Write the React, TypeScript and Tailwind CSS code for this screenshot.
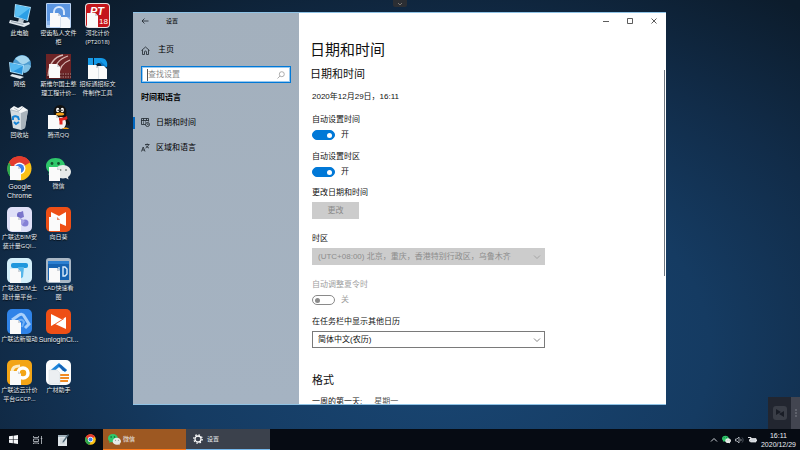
import type { ReactNode } from "react";

const UI_FONT = "font-['Liberation_Sans','Noto_Sans_CJK_SC',sans-serif]";

/* ---------- desktop icons (25 x 25 grid) ---------- */

function Sheet({ x = 3, y = 11 }: { x?: number; y?: number }) {
  return (
    <g>
      <path d={`M${x} ${y}h8l3 3v11h-11z`} fill="#fafafa" />
      <path d={`M${x + 8} ${y}v3h3z`} fill="#cfd3d8" />
    </g>
  );
}

function Art({ children }: { children: ReactNode }) {
  return (
    <svg viewBox="0 0 25 25" className="size-[25px] shrink-0" aria-hidden="true">
      {children}
    </svg>
  );
}

const pcArt = (
  <Art>
    <path d="M8 1l16 3-3 14-14-4z" fill="#a8dcf8" />
    <path d="M9 2l14 3-3 12-12-4z" fill="#2c9fe6" />
    <path d="M9 2l14 3-12 9-3-1z" fill="#5cc0f4" />
    <path d="M12 15l5 2-1 3-5-1z" fill="#b9c4cd" />
    <path d="M3 17l15 3 4-1 1 2-6 3-15-4z" fill="#dfe6ec" />
    <path d="M4 18l13 3-1 1-12-3z" fill="#9aa7b2" />
  </Art>
);

const networkArt = (
  <Art>
    <circle cx="15" cy="10" r="9" fill="#4d9cd0" />
    <path d="M8 5c4-5 12-5 15 2-3 1-5 4-8 3s-4-4-7-5z" fill="#a5d6ee" />
    <path d="M16 12c3-2 6-2 8 0-1 4-4 7-7 7z" fill="#7ec0e4" />
    <path d="M2 8l15 3-1 10-13-3z" fill="#a8dcf8" />
    <path d="M3 9l13 3-1 8-11-3z" fill="#2a96de" />
    <path d="M3 9l13 3-11 6-1-1z" fill="#55b8f0" />
    <path d="M5 20l9 2 3 1-4 2-10-3z" fill="#dfe6ec" />
  </Art>
);

const binArt = (
  <Art>
    <path d="M3 4l18 1-3 18-4 2-8-2z" fill="#d5dce1" />
    <path d="M14 7l7-2-3 18-4 2z" fill="#aab4bc" />
    <path d="M3 4l4-3 4 2 4-2 6 4-7 3z" fill="#f5f7f8" />
    <path d="M7 3l5 3 4-4M4 5l8 2" stroke="#b5bfc7" fill="none" />
    <path d="M8 11l3 1 1 3M12 17l-3 2-2-2M6 15l0-3 2-1" stroke="#1583d6" strokeWidth="2" fill="none" />
  </Art>
);

function ChromeShape() {
  return (
    <g>
      <circle cx="12.500" cy="12.500" r="12" fill="#fbc116" />
      <path d="M12.500 12.500L2 6.500A12 12 0 0 1 23 6.500z" fill="#e33b2e" />
      <path d="M12 6.500h11a12 12 0 0 0-21 0l5 9z" fill="#e33b2e" />
      <path d="M2 6.500l5.500 9 5 3-3 6A12 12 0 0 1 2 6.500z" fill="#2da94f" />
      <circle cx="12.500" cy="12.500" r="6" fill="#fff" />
      <circle cx="12.500" cy="12.500" r="4.600" fill="#3f7fe8" />
    </g>
  );
}

function WeChatShape() {
  return (
    <g>
      <path d="M9.500 2C4 2 0 5.500 0 10c0 2.500 1.200 4.600 3 6l-.6 3 3.400-1.600c1.200.4 2.400.6 3.700.6C15 18 19 14.500 19 10S15 2 9.500 2z" fill="#2fc86b" />
      <circle cx="6" cy="7.500" r="1.400" fill="#14512c" />
      <circle cx="12.500" cy="7.500" r="1.400" fill="#14512c" />
      <path d="M17 9c-4.500 0-8 3-8 6.800s3.500 6.700 8 6.700c1 0 2-.2 2.900-.5L22.500 23.500 22 21c1.800-1.200 3-3 3-5.200C25 12 21.500 9 17 9z" fill="#e6eae8" />
      <circle cx="14.500" cy="14" r="1" fill="#7d8782" />
      <circle cx="20" cy="14" r="1" fill="#7d8782" />
    </g>
  );
}

const chromeArt = (
  <Art>
    <ChromeShape />
    <Sheet x={3} y={10} />
  </Art>
);

const wechatArt = (
  <Art>
    <WeChatShape />
    <Sheet x={3} y={11} />
  </Art>
);

const qqArt = (
  <Art>
    <ellipse cx="14" cy="16" rx="8" ry="8" fill="#111" />
    <ellipse cx="14" cy="7" rx="6.500" ry="7" fill="#111" />
    <path d="M20 12l4 6-1 3-3-4z" fill="#111" />
    <ellipse cx="15" cy="18" rx="5" ry="6" fill="#f2f2f2" />
    <ellipse cx="11.700" cy="5" rx="1.600" ry="2.200" fill="#fff" />
    <ellipse cx="16.300" cy="5" rx="1.600" ry="2.200" fill="#fff" />
    <circle cx="12.200" cy="5.300" r=".8" fill="#111" />
    <circle cx="15.900" cy="5.300" r=".8" fill="#111" />
    <ellipse cx="14" cy="9" rx="4.200" ry="1.600" fill="#f5a31b" />
    <path d="M8 11c4 2.500 9 2.500 13 0l.5 3c-2 1-3 1.300-5 1.500v4h-3v-4c-2 0-4-.5-6-1.500z" fill="#e02420" />
    <path d="M16 24c2-2 6-2 7 0z" fill="#f5a31b" />
    <Sheet x={2} y={10} />
  </Art>
);

const cabinetArt = (
  <Art>
    <rect width="25" height="25" rx="1" fill="#b9d3f4" />
    <rect x="1" y="1" width="23" height="20" fill="#5b95e0" />
    <path d="M8 12V9a5 5 0 0 1 10 0v3" stroke="#d9e8fb" strokeWidth="2" fill="none" />
    <path d="M1 18l23-4v8H1z" fill="#86b2ec" />
    <Sheet x={4} y={10} />
    <path d="M14 14h7l3 3v8H14z" fill="#f4f7fb" />
    <path d="M14.500 14v11" stroke="#c4d2e4" strokeWidth=".6" />
  </Art>
);

const ptArt = (
  <Art>
    <rect width="25" height="25" rx="4" fill="#e8e2e4" />
    <rect x="1" y="1" width="23" height="23" rx="3" fill="#c4161c" />
    <text x="5" y="12" fontSize="11" fontWeight="700" fontStyle="italic" fill="#fff" fontFamily="Liberation Sans">PT</text>
    <text x="14" y="21" fontSize="8" fill="#fff" fontFamily="Liberation Sans">18</text>
    <Sheet x={2} y={10} />
  </Art>
);

const landArt = (
  <Art>
    <rect width="25" height="25" fill="#6d2426" />
    <rect x="0" y="19" width="25" height="6" fill="#5a1c1f" />
    <path d="M2 22C3 10 8 3 17 1M7 22C8 12 12 5 22 2M13 22c0-8 3-13 11-16" stroke="#d9b8b4" strokeWidth="1.300" fill="none" />
    <path d="M14 20h11M14 23h11" stroke="#b8928f" strokeDasharray="1.500 1" />
    <Sheet x={3} y={10} />
  </Art>
);

const bidArt = (
  <Art>
    <path d="M3 4h5v8H3z" fill="#1a9be6" />
    <path d="M9 4h7c5 0 7 4 6 9h-5c0-3-1-4-4-4l-4 3z" fill="#149ae8" />
    <path d="M15 7l7 6h-5z" fill="#0b72bd" />
    <Sheet x={3} y={11} />
    <path d="M13 12h6l3 3v10h-9z" fill="#fafafa" />
    <path d="M13.500 12v13" stroke="#c8d0d6" strokeWidth=".6" />
  </Art>
);

const gqiArt = (
  <Art>
    <rect width="25" height="25" rx="5" fill="#dfe0f8" />
    <circle cx="13" cy="8" r="3" fill="#6f6ac4" />
    <path d="M11 6l5-2 1 6-3 1z" fill="#7a75cc" />
    <circle cx="18" cy="16" r="3.500" fill="#8581d6" />
    <path d="M12 10l6 4-3 4-4-3z" fill="#a5a1e4" />
    <Sheet x={3} y={10} />
  </Art>
);

const sunflowerArt = (
  <Art>
    <rect width="25" height="25" rx="5" fill="#ee4f16" />
    <path d="M5 5l8 4 7-4v14l-7-3-8 3z" fill="#fff" />
    <Sheet x={3} y={10} />
    <path d="M11 10v3h3z" fill="#ee8a66" />
  </Art>
);

const sunloginArt = (
  <Art>
    <rect width="25" height="25" rx="5" fill="#ee4f16" />
    <path d="M5 5l12 6-12 6z" fill="#fff" />
    <path d="M20 8v12L8 14.500z" fill="#fff" />
    <path d="M7 16.500L18 9.500" stroke="#ee4f16" strokeWidth=".9" />
  </Art>
);

const civilArt = (
  <Art>
    <rect width="25" height="25" rx="5" fill="#d4effb" />
    <rect x="4" y="5" width="17" height="5" rx="2" fill="#1f97dd" />
    <path d="M11 9h6l-1 10-3 2z" fill="#56b6ea" />
    <Sheet x={3} y={11} />
  </Art>
);

const cadArt = (
  <Art>
    <rect width="25" height="25" rx="3" fill="#a9b7c5" />
    <rect x="2" y="3" width="21" height="19" fill="#1763b1" />
    <path d="M2 3h21v3H2z" fill="#2c7fd0" />
    <path d="M13 9v9M17 9v9h2l2-2v-5l-2-2z" stroke="#dcecfa" strokeWidth="1.400" fill="none" />
    <Sheet x={3} y={10} />
  </Art>
);

const driverArt = (
  <Art>
    <rect width="25" height="25" rx="5" fill="#2f83e8" />
    <path d="M5 11l7-5c2-1 4-1 5 1l5 8-4 4" stroke="#a9d0fb" strokeWidth="3" fill="none" />
    <path d="M9 13l4-2c2-1 3 0 4 2l-2 5" stroke="#6fb0f6" strokeWidth="2" fill="none" />
    <Sheet x={3} y={11} />
  </Art>
);

const gccpArt = (
  <Art>
    <rect width="25" height="25" rx="5" fill="#f3a516" />
    <path d="M5 13c0-6 3-7 8-7" stroke="#fdebc0" strokeWidth="3" fill="none" />
    <circle cx="16" cy="13" r="5" stroke="#fff" strokeWidth="3.500" fill="none" />
    <Sheet x={3} y={11} />
  </Art>
);

const materialArt = (
  <Art>
    <rect width="25" height="25" rx="5" fill="#fbfcfd" />
    <path d="M6 11l7-6 7 6" stroke="#1f86dc" strokeWidth="3" fill="none" />
    <path d="M12 5l3 0 6 6h-4z" fill="#155fb0" />
    <path d="M14 15h9M14 18h9M14 21h8" stroke="#f08a24" strokeWidth="1.800" />
    <path d="M3 10h8l3 3v11H3z" fill="#eceff2" stroke="#d3d8dd" strokeWidth=".5" />
  </Art>
);

type Shortcut = { art: ReactNode; lines: string[]; latin?: boolean };

const columns: Shortcut[][] = [
  [
    { art: pcArt, lines: ["此电脑"] },
    { art: networkArt, lines: ["网络"] },
    { art: binArt, lines: ["回收站"] },
    { art: chromeArt, lines: ["Google", "Chrome"], latin: true },
    { art: gqiArt, lines: ["广联达BIM安", "装计量GQI..."] },
    { art: civilArt, lines: ["广联达BIM土", "建计量平台..."] },
    { art: driverArt, lines: ["广联达新驱动"] },
    { art: gccpArt, lines: ["广联达云计价", "平台GCCP..."] },
  ],
  [
    { art: cabinetArt, lines: ["密齿私人文件", "柜"] },
    { art: landArt, lines: ["斯维尔国土整", "理工程计价..."] },
    { art: qqArt, lines: ["腾讯QQ"] },
    { art: wechatArt, lines: ["微信"] },
    { art: sunflowerArt, lines: ["向日葵"] },
    { art: cadArt, lines: ["CAD快速看", "图"] },
    { art: sunloginArt, lines: ["SunloginCl..."], latin: true },
    { art: materialArt, lines: ["广材助手"] },
  ],
  [
    { art: ptArt, lines: ["河北计价", "(PT2018)"] },
    { art: bidArt, lines: ["招标通招标文", "件制作工具"] },
  ],
];

function DesktopIcons() {
  return (
    <div className="flex pt-[3px] font-['Open_Sans','Noto_Sans_CJK_SC',sans-serif]">
      {columns.map((items, i) => (
        <div key={i} className="flex w-[39px] flex-col">
          {items.map((item) => (
            <button key={item.lines[0]} type="button" className="flex h-[51px] flex-col items-center gap-px">
              {item.art}
              <span
                className={`flex flex-col items-center leading-[9px] whitespace-nowrap text-[#e9eef3] [text-shadow:0_1px_1px_#000] ${
                  item.latin ? "font-['Liberation_Sans',sans-serif] text-[7px]" : "text-[6px]"
                }`}
              >
                {item.lines.map((line) => (
                  <span key={line}>{line}</span>
                ))}
              </span>
            </button>
          ))}
        </div>
      ))}
    </div>
  );
}

/* ---------- settings window ---------- */

function Sidebar() {
  return (
    <aside className="flex w-[166px] shrink-0 flex-col bg-linear-to-b from-[#a3b0bd] to-[#a5b3c2] text-[8px] leading-3 text-black">
      <header className="flex h-[15px] items-center gap-[17px] pl-2 text-[6px]">
        <button type="button" aria-label="返回">
          <svg viewBox="0 0 8 8" className="size-2" fill="none" stroke="#1d242b" strokeWidth=".8">
            <path d="M7.500 4H1M3.500 1.500L1 4l2.500 2.500" />
          </svg>
        </button>
        <span>设置</span>
      </header>

      <button type="button" className="mt-4 flex h-3 items-center gap-2 pl-2">
        <svg viewBox="0 0 9 9" className="size-[9px]" fill="none" stroke="#1d242b" strokeWidth=".8">
          <path d="M.5 4.500L4.500 1l4 3.500M1.500 4v4.500h2V6a1 1 0 0 1 2 0v2.500h2V4" />
        </svg>
        主页
      </button>

      <label className="mx-2 mt-[10px] flex h-[17px] items-center border border-[#0078d7] bg-white px-[5px] ring-1 ring-[#0078d7]/40 ring-inset">
        <input
          type="search"
          aria-label="查找设置"
          placeholder="查找设置"
          className="w-full min-w-0 flex-1 border-l border-[#555] bg-transparent text-[8px] leading-3 outline-none placeholder:text-[#8a8a8a]"
        />
        <svg viewBox="0 0 8 8" className="size-2 shrink-0" fill="none" stroke="#9a9a9a" strokeWidth=".8">
          <circle cx="4.800" cy="3.200" r="2.500" />
          <path d="M3 5L.5 7.500" />
        </svg>
      </label>

      <h2 className="mt-[9px] ml-2 font-bold">时间和语言</h2>

      <nav className="mt-[6px] flex flex-col">
        <a href="#date" aria-current="page" className="flex h-[25px] items-center">
          <span className="h-3 w-[2px] bg-[#0067c0]" />
          <svg viewBox="0 0 9 9" className="mx-[6px] size-[9px]" fill="none" stroke="#1d242b" strokeWidth=".8">
            <path d="M4.500 6.500H.5v-6h7v3M.5 2.500h7M2 4h1M4 4h1M2 5.200h1M2.500.5v2M5.500.5v2" />
            <circle cx="6.500" cy="6.500" r="2" />
            <path d="M6.500 5.500v1h1" />
          </svg>
          日期和时间
        </a>
        <a href="#region" className="flex h-[25px] items-center">
          <span className="h-3 w-[2px]" />
          <svg viewBox="0 0 9 9" className="mx-[6px] size-[9px]" fill="none" stroke="#1d242b" strokeWidth=".8">
            <path d="M.5 8.500l1.700-4.500L4 8.500M1.200 7h2.200M4 1.500h4.500M6.200.5v1M7.700 1.500C7 3.500 6 4.500 4.500 5M5 2.500c.5 1.200 1.500 2 3 2.500" />
          </svg>
          区域和语言
        </a>
      </nav>
    </aside>
  );
}

function Toggle({ id, label, on, disabled = false }: { id: string; label: string; on: boolean; disabled?: boolean }) {
  return (
    <div className={disabled ? "text-[#a0a0a0]" : ""}>
      <label htmlFor={id} className="block">
        {label}
      </label>
      <div className="mt-1 flex h-[10px] items-center gap-[6px]">
        <input
          id={id}
          type="checkbox"
          role="switch"
          defaultChecked={on}
          disabled={disabled}
          className="flex h-[10px] w-[23px] appearance-none items-center rounded-full border border-[#8a8a8a] px-[2px] before:size-[5px] before:rounded-full before:bg-[#8a8a8a] checked:justify-end checked:border-[#0078d7] checked:bg-[#0078d7] checked:before:bg-white"
        />
        <span>{on ? "开" : "关"}</span>
      </div>
    </div>
  );
}

function Dropdown({ id, label, value, disabled = false }: { id: string; label: string; value: string; disabled?: boolean }) {
  return (
    <div>
      <label htmlFor={id} className="block">
        {label}
      </label>
      <div className="mt-[3px] grid w-[233px] items-center">
        <select
          id={id}
          disabled={disabled}
          defaultValue={value}
          className="col-start-1 row-start-1 h-[17px] w-full appearance-none border border-[#7a7a7a] bg-white px-[5px] leading-3 disabled:border-[#cccccc] disabled:bg-[#cccccc] disabled:text-[#8c8c8c] disabled:opacity-100"
        >
          <option>{value}</option>
        </select>
        <svg viewBox="0 0 8 8" className="pointer-events-none col-start-1 row-start-1 mr-1 size-2 justify-self-end" fill="none" stroke={disabled ? "#999999" : "#666666"} strokeWidth=".8">
          <path d="M1 2.500l3 3 3-3" />
        </svg>
      </div>
    </div>
  );
}

function WindowButtons() {
  return (
    <div className="flex h-[15px] justify-end text-[#333]">
      <button type="button" aria-label="最小化" className="flex w-6 items-center justify-center">
        <svg viewBox="0 0 6 6" className="size-[6px]" stroke="currentColor" strokeWidth=".8">
          <path d="M0 3.500h6" />
        </svg>
      </button>
      <button type="button" aria-label="最大化" className="flex w-6 items-center justify-center">
        <svg viewBox="0 0 6 6" className="size-[6px]" fill="none" stroke="currentColor" strokeWidth=".8">
          <path d="M.5 .5h5v5h-5z" />
        </svg>
      </button>
      <button type="button" aria-label="关闭" className="flex w-6 items-center justify-center">
        <svg viewBox="0 0 6 6" className="size-[6px]" stroke="currentColor" strokeWidth=".8">
          <path d="M.5 .5l5 5M5.500 .5l-5 5" />
        </svg>
      </button>
    </div>
  );
}

function SettingsWindow() {
  return (
    <section className="absolute top-3 right-[134px] bottom-[45px] left-[133px] flex overflow-hidden border-y border-[#8fc3e6] bg-white">
      <Sidebar />
      <div className="flex min-w-0 flex-1 flex-col">
        <WindowButtons />
        <div className="flex min-h-0 flex-1">
          <main className="min-w-0 flex-1 overflow-hidden pt-3 pl-[13px] text-[8px] leading-3 text-[#111]">
            <h1 className="-ml-[2px] text-[15px] leading-5">日期和时间</h1>
            <h2 className="mt-[6px] -ml-[2px] text-[11px] leading-4">日期和时间</h2>
            <p className="mt-[9px]">2020年12月29日，16:11</p>
            <div className="mt-[11px] flex flex-col gap-[11px]">
              <Toggle id="auto-time" label="自动设置时间" on />
              <Toggle id="auto-zone" label="自动设置时区" on />
            </div>
            <p className="mt-[10px]">更改日期和时间</p>
            <button type="button" disabled className="mt-[3px] block h-[17px] w-[47px] bg-[#cccccc] text-[#8a8a8a]">
              更改
            </button>
            <div className="mt-[14px]">
              <Dropdown id="zone" label="时区" value="(UTC+08:00) 北京，重庆，香港特别行政区，乌鲁木齐" disabled />
            </div>
            <div className="mt-[14px]">
              <Toggle id="dst" label="自动调整夏令时" on={false} disabled />
            </div>
            <div className="mt-[11px]">
              <Dropdown id="calendar" label="在任务栏中显示其他日历" value="简体中文(农历)" />
            </div>
            <h2 className="mt-6 text-[11px] leading-4">格式</h2>
            <dl className="mt-2 flex gap-3">
              <dt>一周的第一天:</dt>
              <dd className="text-[#555]">星期一</dd>
            </dl>
          </main>
          <div className="w-[2px] pt-[42px]">
            <div className="h-[206px] w-px bg-[#6f7780]" />
          </div>
        </div>
      </div>
    </section>
  );
}

/* ---------- taskbar ---------- */

function Taskbar() {
  return (
    <footer className="flex h-[21px] shrink-0 items-stretch bg-[#060b13] text-[6px] leading-[9px] text-[#eceff3]">
      <button type="button" aria-label="开始" className="flex w-[26px] items-center justify-center">
        <svg viewBox="0 0 9 9" className="size-[9px]" fill="#f5f7f9">
          <path d="M0 1.300L3.900.8v3.400H0zM4.500.7L9 0v4.200H4.500zM0 4.800h3.900v3.400L0 7.700zM4.500 4.800H9V9l-4.500-.7z" />
        </svg>
      </button>
      <button type="button" aria-label="任务视图" className="flex w-[23px] items-center justify-center">
        <svg viewBox="0 0 10 8" className="h-2 w-[10px]" fill="none" stroke="#c3c8ce" strokeWidth=".8">
          <path d="M.5 0v1.500h5V0M.5 3h5v2.500h-5zM.5 8V7h5v1M8.500 0v8M7.700 2.500h1.600" />
        </svg>
      </button>
      <button type="button" aria-label="记事本" className="flex w-[28px] items-center justify-center">
        <svg viewBox="0 0 12 12" className="size-3">
          <path d="M1 1h9v11H1z" fill="#dfe6ea" />
          <path d="M1 1h9v2H1z" fill="#9fb0ba" />
          <path d="M3 5h4M3 7h3M3 9h5" stroke="#b4c0c8" strokeWidth=".7" />
          <path d="M11 0l1 1-5 7-1.500.7.3-1.700z" fill="#4c6573" />
        </svg>
      </button>
      <button type="button" aria-label="Google Chrome" className="flex w-[26px] items-center justify-center">
        <svg viewBox="0 0 25 25" className="size-[11px]">
          <ChromeShape />
        </svg>
      </button>
      <button type="button" className="flex w-[83px] items-center gap-[2px] border-b border-[#ff7a1a] bg-[#9d5822] pl-[5px]">
        <svg viewBox="0 0 25 25" className="size-[13px]">
          <WeChatShape />
        </svg>
        微信
      </button>
      <button type="button" className="flex w-[84px] items-center gap-1 border-b border-[#76b9ed] bg-[#3b414c] pl-[7px]">
        <svg viewBox="0 0 10 10" className="size-[10px]" fill="none" stroke="#fff">
          <circle cx="5" cy="5" r="3" strokeWidth="1.300" />
          <circle cx="5" cy="5" r="4.200" strokeWidth="1.300" strokeDasharray="1.500 1.800" />
        </svg>
        设置
      </button>

      <div className="ml-auto flex items-center gap-1 pr-1">
        <button type="button" aria-label="显示隐藏的图标">
          <svg viewBox="0 0 8 8" className="size-2" fill="none" stroke="#dfe3e8" strokeWidth=".9">
            <path d="M1 5.500l3-3 3 3" />
          </svg>
        </button>
        <svg viewBox="0 0 25 25" className="size-[9px]" aria-hidden="true">
          <WeChatShape />
        </svg>
        <svg viewBox="0 0 9 8" className="h-2 w-[9px]" fill="none" stroke="#c3c8ce" strokeWidth=".8" aria-hidden="true">
          <path d="M.5 3v2h1.500L4 7V1L2 3zM5.500 2.800c.7.700.7 1.700 0 2.400" />
          <path d="M7 1.500c1.500 1.500 1.500 3.500 0 5" stroke="#5d646d" />
        </svg>
        <svg viewBox="0 0 9 8" className="h-2 w-[9px]" aria-hidden="true">
          <path d="M2.500 2.500H8v3.500H2.500z" fill="#cfd4da" stroke="#f0f2f4" strokeWidth=".7" />
          <path d="M8.500 3.500v1.500M0 1.500h3v2H1.500v2" stroke="#f0f2f4" strokeWidth=".9" fill="none" />
        </svg>
        <time className="flex flex-col items-center text-[7px] leading-[9px]">
          <span>16:11</span>
          <span>2020/12/29</span>
        </time>
      </div>
    </footer>
  );
}

export default function App() {
  return (
    <div className={`relative flex h-screen flex-col overflow-hidden bg-[radial-gradient(ellipse_75%_95%_at_55%_78%,#194673_0%,#153b62_45%,#112c49_72%,#0c1c2c_100%)] ${UI_FONT}`}>
      <div className="min-h-0 flex-1">
        <DesktopIcons />
      </div>

      <SettingsWindow />

      <button type="button" aria-label="展开工具栏" className="absolute top-0 left-1/2 flex h-[7px] w-[14px] -translate-x-1/2 items-center justify-center rounded-b-[2px] bg-[#2b2e33]">
        <svg viewBox="0 0 6 4" className="h-1 w-[6px]" fill="none" stroke="#85807a" strokeWidth=".9">
          <path d="M1 1l2 2 2-2" />
        </svg>
      </button>

      <div className="absolute right-0 bottom-[21px] flex h-8">
        <button type="button" aria-label="远程控制" className="flex w-[23px] items-center justify-center bg-[#222630]">
          <svg viewBox="0 0 14 14" className="size-[14px]">
            <rect width="14" height="14" rx="3" fill="#3a3e47" />
            <path d="M3 3l5 3-5 3zM11 5v6L6 8z" fill="#191d26" />
          </svg>
        </button>
        <button type="button" aria-label="收起" className="flex w-[9px] items-center justify-center bg-[#424550]">
          <svg viewBox="0 0 2 8" className="h-2 w-[2px]" fill="#5f626c">
            <path d="M0 0h2v2H0zM0 3h2v2H0zM0 6h2v2H0z" />
          </svg>
        </button>
      </div>

      <Taskbar />
    </div>
  );
}
